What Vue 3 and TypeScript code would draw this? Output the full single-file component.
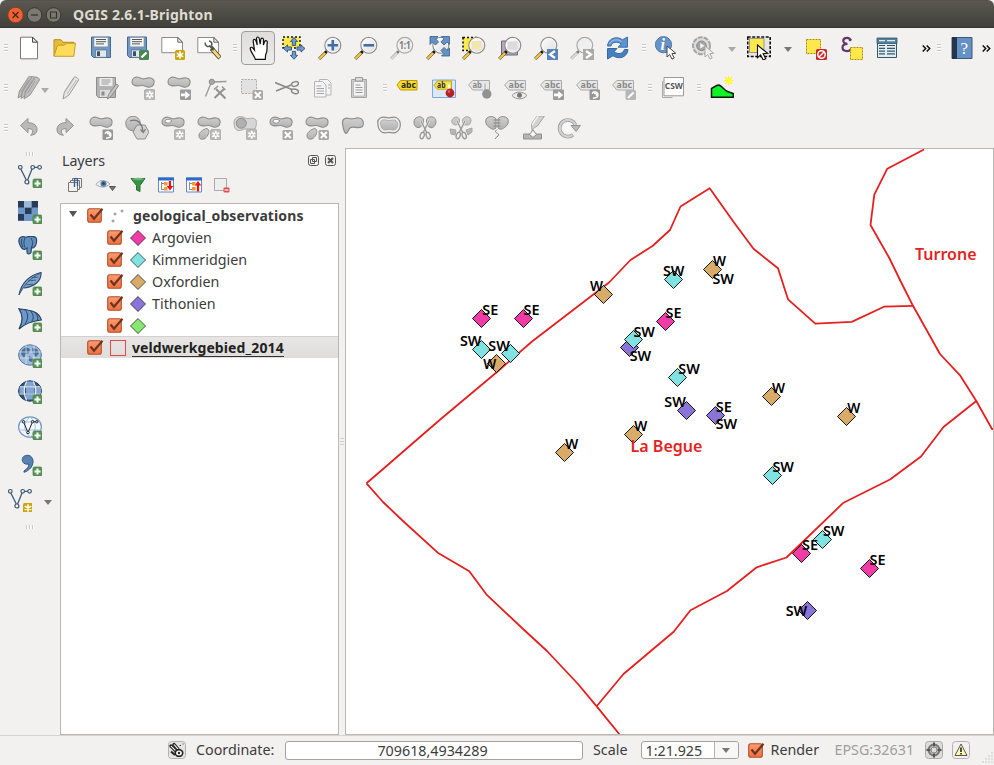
<script setup lang="ts">
interface Tool {
  icon?: string
  kind?: 'grip' | 'arrow' | 'more'
  cls?: string
}

const tool = (icon: string, cls = ''): Tool => ({ icon, cls })
const grip: Tool = { kind: 'grip' }

const fileBar: Tool[] = [
  tool('new'), tool('open'), tool('save'), tool('saveas'), tool('composer'), tool('manager'),
  grip,
  tool('hand', 'active'), tool('pan'), tool('zoomin'), tool('zoomout'), tool('zoomone'), tool('zoomfull'),
  tool('zoomsel'), tool('zoomlayer'), tool('zoomlast'), tool('zoomnext'), tool('refresh'),
  grip,
  tool('identify'), tool('action'), { kind: 'arrow', cls: 'dim' },
  tool('select'), { kind: 'arrow' },
  tool('deselect'), tool('epsilon'), tool('table'),
  { kind: 'more', cls: 'wide' }, { kind: 'grip', cls: 'tight' }, tool('help'), { kind: 'more' },
]

const editBar: Tool[] = [
  tool('pencils', 'narrow'), { kind: 'arrow', cls: 'dim small' },
  tool('pencil'), tool('saveedits'), tool('capture'), tool('move'), tool('node'),
  tool('delsel'), tool('cut'), tool('copy'), tool('paste'),
  grip,
  tool('abc'), tool('abcpin'), tool('abcpingrey'), tool('abceye'), tool('abcmove'), tool('abcrot'), tool('abcedit'),
  grip, tool('csw'), grip, tool('terrain'),
]

const advancedBar: Tool[] = [
  'undo', 'redo', 'rotatefeat', 'simplify', 'addring', 'addpart', 'fillring', 'delring', 'delpart',
  'reshape', 'offset', 'split', 'splitparts', 'merge', 'mergeattr', 'rotatesym',
].map((n) => tool(n))

const bars = [fileBar, editBar, advancedBar]

const sideIcons = ['vector', 'raster', 'postgis', 'spatialite', 'mssql', 'wms', 'wcs', 'wfs', 'csv']

const colors = {
  argovien: '#f13ca8',
  kimmeridgien: '#80e3e1',
  oxfordien: '#d8ab68',
  tithonien: '#8a74d8',
  other: '#86e96f',
}

const classes = [
  { name: 'Argovien', color: colors.argovien },
  { name: 'Kimmeridgien', color: colors.kimmeridgien },
  { name: 'Oxfordien', color: colors.oxfordien },
  { name: 'Tithonien', color: colors.tithonien },
  { name: '', color: colors.other },
]

const boundaries = [
  '366.5,483.3 386,466.5 409,446.500 442,418 497,372 532,341.5 609,282.5 630.5,260 652.5,246 670,230 680.5,206.5 709.7,188.3 734,222.5 753.5,248.8 778,268.3 788,299.3 815.3,323.7 851.7,321.9 884,306.7 913,305.8',
  '924,149.5 887.3,168.7 874.3,194.7 870.5,225 889.3,258 901,282 913,305.8 926,329 940,354 960.3,375.7 976.3,401 992,429 996,429',
  '366.5,483.3 383,502 403,521 437.7,552.7 469.3,571.3 486.3,594.3 522,628 547,651 578,684 596.7,706.3 620,735',
  '596.7,706.3 623.5,674 673.7,631.7 690.5,610.3 727,591 756.7,567.3 786.5,557.5 843.5,502.7 890,479.5 921,456.5 943.5,427 976.3,401',
]

const c = colors
const points: [number, number, string][] = [
  [481.5, 318.5, c.argovien], [523.5, 318.5, c.argovien], [603.5, 294.5, c.oxfordien],
  [673.5, 279.5, c.kimmeridgien], [712.5, 269.5, c.oxfordien], [665.5, 321.5, c.argovien],
  [629.5, 347.5, c.tithonien], [633.5, 339.5, c.kimmeridgien], [481.5, 349.5, c.kimmeridgien],
  [496.5, 363.5, c.oxfordien], [510.5, 353.5, c.kimmeridgien], [677.5, 377.5, c.kimmeridgien],
  [686.5, 410.5, c.tithonien], [715.5, 415.5, c.tithonien], [771.5, 396.5, c.oxfordien],
  [846.5, 416.5, c.oxfordien], [633.5, 434.5, c.oxfordien], [564.5, 452.5, c.oxfordien],
  [772.5, 475.5, c.kimmeridgien], [822.5, 539.5, c.kimmeridgien], [801.5, 553.5, c.argovien],
  [869.5, 568.5, c.argovien], [807.5, 610.5, c.tithonien],
]

const labels: [string, number, number][] = [
  ['SE', 482.3, 315], ['SE', 523.5, 315], ['W', 590, 291], ['SW', 663, 276.3], ['W', 713, 266.3],
  ['SW', 712.5, 283.5], ['SE', 665.5, 318], ['SW', 633.5, 336.5], ['SW', 629.7, 361.3], ['SW', 460, 345.8],
  ['SW', 488.3, 350.5], ['W', 483.3, 368.5], ['SW', 678.3, 374.3], ['SW', 664.3, 407], ['SE', 715.7, 412.3],
  ['SW', 715.7, 429.3], ['W', 772, 393.3], ['W', 847.3, 413.3], ['W', 634.3, 431], ['W', 565.3, 449],
  ['SW', 772.5, 472], ['SW', 823, 536], ['SE', 802, 550], ['SE', 869.5, 565.3], ['SW', 785.7, 615.5],
]
const labelWidth: Record<string, number> = { SE: 16, SW: 21.5, W: 13 }
</script>

<template>
  <div class="window">
    <svg class="sprite" width="0" height="0" aria-hidden="true">
      <defs>
        <linearGradient id="lens" x1="0" y1="0" x2="1" y2="1"><stop offset="0" stop-color="#fff" /><stop offset="1" stop-color="#dcdcdc" /></linearGradient>
        <linearGradient id="blob" x1="0" y1="0" x2="0" y2="1"><stop offset="0" stop-color="#cfcfcf" /><stop offset="1" stop-color="#b2b2b2" /></linearGradient>
        <linearGradient id="orange" x1="0" y1="0" x2="0" y2="1"><stop offset="0" stop-color="#fc9c70" /><stop offset="1" stop-color="#ee6f40" /></linearGradient>
        <g id="b-plus"><rect x="15" y="15" width="9" height="9" rx="1.5" fill="#5a9557" stroke="#3f7b3e" stroke-width=".7" /><path d="M19.5 16.5v6M16.5 19.5h6" stroke="#fff" stroke-width="2" /></g>
        <g id="b-gold"><rect x="14" y="14" width="10" height="10" rx="1.5" fill="#cda40b" /><path d="M19 15.200v7.600M15.700 17.100l6.600 3.800M22.300 17.100l-6.600 3.800" stroke="#fff" stroke-width="1.500" /></g>
        <g id="b-star"><rect x="13.500" y="13.500" width="10.500" height="10.500" rx="1.500" fill="#b9b9b9" stroke="#a6a6a6" stroke-width=".8" /><path d="M18.750 14.800v8M15.300 16.800l6.900 4M22.200 16.800l-6.900 4" stroke="#fff" stroke-width="1.900" /><circle cx="18.750" cy="18.800" r="1.100" fill="#b5b5b5" /></g>
        <g id="b-x"><rect x="13.500" y="14" width="10.500" height="10" rx="1.500" fill="#a8a8a8" /><path d="M15.800 16l6 6M21.800 16l-6 6" stroke="#fff" stroke-width="1.900" /></g>
        <g id="b-arrow"><rect x="13" y="13.500" width="11" height="10.500" rx="1" fill="#9b9b9b" /><path d="M14 17.500h4.200v-2.600l5 4-5 4v-2.600H14z" fill="#fff" /></g>
        <g id="b-rot"><rect x="13.500" y="13.500" width="10.500" height="10.500" rx="1" fill="#969696" /><path d="M17 22.300l2.500-.5a3 3 0 1 0-3.300-4M18 17.500h2.500v2.500" fill="none" stroke="#fff" stroke-width="1.400" /></g>
        <g id="floppy">
          <path d="M2.500 1h19v20.5h-17l-2-2z" fill="#6f98c6" stroke="#44688f" /><path d="M5 1.500h14v9.300H5z" fill="#f5f5f0" stroke="#7b8a9a" stroke-width=".5" /><path d="M7 3.500h10M7 5.700h10M7 7.900h8" stroke="#555" stroke-width="1" /><path d="M6.500 14h11v7.300h-11z" fill="#e4e7ea" stroke="#49637f" stroke-width=".6" /><rect x="8" y="15.300" width="3" height="4.700" fill="#35516f" />
        </g>
        <g id="page"><path d="M.8 1.500h16l4.700 4.700v10.500H.8z" fill="#fff" stroke="#8a8a8a" /><path d="M16.800 1.500v4.700h4.700z" fill="#eee" stroke="#444" stroke-width=".8" /></g>
        <g id="lensbody">
          <path d="M8.2 15.8l-7 7" stroke="#555" stroke-width="3.100" /><path d="M7.400 16.800l-6 6" stroke="#f7c62e" stroke-width="2.200" /><path d="M8.800 15.200l-1.700 1.700" stroke="#111" stroke-width="2.600" />
          <circle cx="14.800" cy="9.300" r="7.900" fill="url(#lens)" stroke="#8b8b8b" stroke-width="1.300" /><circle cx="14.800" cy="9.300" r="6.900" fill="none" stroke="#fff" stroke-width=".7" />
        </g>
        <g id="lensgrey">
          <path d="M8.200 15.800l-7 7" stroke="#aaa" stroke-width="3" /><path d="M7.400 16.800l-6 6" stroke="#ddd" stroke-width="1.800" /><path d="M8.800 15.200l-1.700 1.700" stroke="#777" stroke-width="2.400" />
          <circle cx="14.800" cy="9.300" r="7.900" fill="#efefef" stroke="#aaa" stroke-width="1.200" />
        </g>
        <path id="bean" d="M1 5.700C1 2.400 4 .9 7 1.200c2.600.3 4 2.300 6.500 1.600C17.500 1.400 22.400 1.200 23 5.200c.6 4.200-2.600 6.500-6 6-2.500-.4-3.500-1.900-6-1.700C6.500 10.300 1 10.300 1 5.700z" fill="url(#blob)" stroke="#8d8d8d" stroke-width="1.100" />
        <path id="cursor" d="M0 0v11l2.700-2.400 2.300 4.500 2.200-1.200-2.300-4.300 3.900-.3z" />
        <g id="tag"><path d="M.6 9L4.800 4.500h16.700v9.500H4.800z" fill="#e7e7e7" stroke="#aaa" /><text x="4.600" y="12.300" font-size="9.500" font-weight="700" fill="#8a8a8a" textLength="15.500" lengthAdjust="spacingAndGlyphs">abc</text></g>
        <path id="pencilshape" d="M1 23l1.400-7L12 1.300c1-1 5 1 4.500 2.800L7 19z" stroke-linejoin="round" />
        <g id="scissors" fill="none" stroke="#999"><path d="M8 5l5.500 11M16 5l-5.500 11" stroke="#f2f1f0" stroke-width="2.600" /><path d="M8 5l5.500 11M16 5l-5.500 11" stroke-width="1.400" /><ellipse cx="9.200" cy="19.500" rx="1.900" ry="3.300" stroke-width="1.400" transform="rotate(20 9.200 19.500)" /><ellipse cx="15.200" cy="19.500" rx="1.900" ry="3.300" stroke-width="1.400" transform="rotate(-20 15.200 19.500)" /></g>
        <g id="vee" fill="none"><path d="M2.800 5l5.500 11M9.600 16L14 5M16.300 3.300h3.500" stroke-width="1.300" /><circle cx="2.300" cy="3.300" r="1.800" /><circle cx="14.700" cy="3.300" r="1.800" /><circle cx="21.600" cy="3.300" r="1.800" /><circle cx="8.900" cy="18" r="2" /></g>
        <g id="globe"><ellipse cx="12" cy="11" rx="11.400" ry="10.200" /></g>

        <symbol id="i-new" viewBox="0 0 24 24"><path d="M3.500 1.200h12l5 5v16.600h-17z" fill="#fff" stroke="#777" /><path d="M15.500 1.200v5h5z" fill="#eee" stroke="#333" stroke-width=".9" /></symbol>
        <symbol id="i-open" viewBox="0 0 24 24"><path d="M1 20V3.700h7l2 2.600h11v3" fill="#e8bc37" stroke="#b58b18" /><path d="M1 20.300L4.500 9.200h7l2-2h9L20.800 20.300z" fill="#ffdb5c" stroke="#c1961d" stroke-width=".9" /></symbol>
        <symbol id="i-save" viewBox="0 0 24 24"><use href="#floppy" /></symbol>
        <symbol id="i-saveas" viewBox="0 0 24 24"><use href="#floppy" /><rect x="14" y="14" width="10" height="10" rx="1.500" fill="#478651" /><path d="M16.500 21.500l5-5" stroke="#fff" stroke-width="2.400" /></symbol>
        <symbol id="i-composer" viewBox="0 0 24 24"><use href="#page" /><use href="#b-gold" /></symbol>
        <symbol id="i-manager" viewBox="0 0 24 24"><use href="#page" /><path d="M14.500 12.500l8.500 9.500" stroke="#594b1b" stroke-width="4.600" /><path d="M15.500 13.500l7 8" stroke="#efd983" stroke-width="2.700" /><path d="M8 6.500c0 3.800 3 4.500 4.500 3.500l4 4.500M12 5c2.800.5 3.600 3 2.300 4.800l3 3.200" fill="none" stroke="#555" stroke-width="1.500" /></symbol>
        <symbol id="i-hand" viewBox="0 0 24 24"><path d="M9.300 23.300C8.500 19.500 5.300 17.500 4.300 13c-.3-2 1.700-2.300 2.600-.8l1.600 2L7.200 5.100c-.2-2.200 2-2.400 2.600-.6L11.300 9 10.500 2.700c0-2.200 2.400-2.200 2.700-.2L14.200 8.200l.6-4.900c.4-1.900 2.600-1.500 2.700.4L17.400 9l1.300-3.400c.8-1.600 2.900-.8 2.600 1-1 5.500 1 7.500-1.700 12.300l-.3 4.400z" fill="#fff" stroke="#111" stroke-width="1.200" /></symbol>
        <symbol id="i-pan" viewBox="0 0 24 24"><path d="M1 1h17v11H1z" fill="#ffe84b" stroke="#111" stroke-width="1.400" stroke-dasharray="2 2" /><path d="M12 1.500l3.600 4h-2v4h-3.200v-4h-2zM12 23.300l3.600-4h-2v-4h-3.200v4h-2zM1.500 12.500l4-3.600v2h4v3.200h-4v2zM23 12.500l-4-3.600v2h-4v3.200h4v2z" fill="#6e9bd0" stroke="#32557e" stroke-width=".9" /></symbol>
        <symbol id="i-zoomin" viewBox="0 0 24 24"><use href="#lensbody" /><path d="M14.800 4v10.600M9.500 9.300h10.600" stroke="#3f6fa8" stroke-width="2.600" /></symbol>
        <symbol id="i-zoomout" viewBox="0 0 24 24"><use href="#lensbody" /><path d="M9.500 9.300h10.600" stroke="#3f6fa8" stroke-width="2.600" /></symbol>
        <symbol id="i-zoomone" viewBox="0 0 24 24"><use href="#lensgrey" /><text x="9.200" y="13" font-size="10" font-weight="700" fill="#777" textLength="11.500" lengthAdjust="spacingAndGlyphs">1:1</text></symbol>
        <symbol id="i-zoomfull" viewBox="0 0 24 24"><use href="#lensbody" /><path d="M4 .500h8L9.600 2.900l3 3-3.200 3.200-3-3L4 8.500zM23.500.500h-8l2.400 2.400-3 3L18 9l3.100-3 2.400 2.400zM23.500 20h-8l2.400-2.400-3-3 3.200-3.200 3 3 2.400-2.400z" fill="#6691c4" stroke="#345c8c" stroke-width=".8" /></symbol>
        <symbol id="i-zoomsel" viewBox="0 0 24 24"><path d="M1 1.500h14v13H1z" fill="#ffe84b" stroke="#111" stroke-width="1.600" stroke-dasharray="2 2" /><use href="#lensbody" /><path d="M9.500 5h10v8.500h-10z" fill="#f1e6ad" /></symbol>
        <symbol id="i-zoomlayer" viewBox="0 0 24 24"><path d="M3.500 5h16v14h-16z" fill="#b5a8b8" stroke="#70657a" /><use href="#lensbody" /><path d="M9.500 5.500h9.500v8h-9.500z" fill="#ded8e1" /></symbol>
        <symbol id="i-zoomlast" viewBox="0 0 24 24"><use href="#lensbody" /><rect x="13" y="13" width="11" height="11" fill="#5685b9" /><path d="M21 15l-5 3.500 5 3.500" fill="none" stroke="#fff" stroke-width="2.200" /></symbol>
        <symbol id="i-zoomnext" viewBox="0 0 24 24"><use href="#lensgrey" /><rect x="13" y="13" width="11" height="11" fill="#aaa" /><path d="M16 15l5 3.500-5 3.500" fill="none" stroke="#fff" stroke-width="2.200" /></symbol>
        <symbol id="i-refresh" viewBox="0 0 24 24"><path d="M1.500 10C2 3 9.500-.8 16.500 3.700L21.500 1v10.200H12L15.300 8C11 5 6 6 5 10z" fill="#5d93cd" stroke="#3c70ab" /><path d="M22 13.500c-.5 7-8 10.800-15 6.300L1.500 23V12.500H11L8 15.800c4.300 3 9.300 2 10.300-2.300z" fill="#4581c2" stroke="#3768a3" /><path d="M3.500 8C6 3 12 3 15.500 5.500" fill="none" stroke="#a9c9e8" /></symbol>
        <symbol id="i-identify" viewBox="0 0 24 24"><circle cx="8.500" cy="8.700" r="8.100" fill="#6792c7" stroke="#4e78aa" /><text x="5.500" y="14" font-size="16" font-family="Liberation Serif, serif" font-style="italic" font-weight="700" fill="#fff">i</text><use href="#cursor" x="12" y="10" fill="#fff" stroke="#444" /></symbol>
        <symbol id="i-action" viewBox="0 0 24 24"><circle cx="10.500" cy="9.800" r="8.500" fill="#ddd" stroke="#a5a5a5" stroke-width="2" stroke-dasharray="5 1" /><circle cx="10.500" cy="9.800" r="4.800" fill="#a5a5a5" stroke="#888" /><path d="M9.200 7v5.600l4.500-2.800z" fill="#f4f4f4" /><use href="#cursor" x="14" y="10" fill="#eee" stroke="#aaa" /></symbol>
        <symbol id="i-select" viewBox="0 0 24 24"><path d="M.700 1h22.500v19.500H.700z" fill="#e6e6e6" stroke="#111" stroke-width="1.600" stroke-dasharray="3 1.500" /><path d="M2.500 2.500h14.500v14H2.500z" fill="#ffe84b" stroke="#777" stroke-width=".7" /><use href="#cursor" fill="#fff" stroke="#111" transform="translate(10.500 9) scale(1.150)" /></symbol>
        <symbol id="i-deselect" viewBox="0 0 24 24"><path d="M3.500 3.500h14v14h-14z" fill="#ffe84b" stroke="#b28a00" stroke-dasharray="2 1" /><rect x="13" y="13" width="11" height="11" rx="1.500" fill="#d12525" /><circle cx="18.500" cy="18.500" r="3.700" fill="none" stroke="#fff" stroke-width="1.500" /><path d="M16 21l5-5" stroke="#fff" stroke-width="1.500" /></symbol>
        <symbol id="i-epsilon" viewBox="0 0 24 24"><path d="M12 4.500C11 2.300 9.500 1.800 8 1.800 5.500 1.800 4.300 3.300 4.300 4.800c0 2 1.800 3 4.200 3-3.500 0-5 1.300-5 3.800 0 2.200 2 3.500 4.500 3.500 2.800 0 4-1.500 4.500-3" fill="none" stroke="#633a6b" stroke-width="2.200" /><circle cx="11" cy="4" r="1.300" fill="#633a6b" /><path d="M11.500 11.500h12v12h-12z" fill="#ffe84b" stroke="#b28a00" stroke-dasharray="2 1" /></symbol>
        <symbol id="i-table" viewBox="0 0 24 24"><path d="M2.500 2.500h19v19h-19z" fill="#e3ebf0" stroke="#31576f" /><path d="M2 2h20v5.500H2z" fill="#53809b" stroke="#31576f" stroke-width=".8" /><path d="M4 4.700h6M12 4.700h8" stroke="#e3ebf0" stroke-width="1.200" /><path d="M4 9.500h6M12 9.500h8M4 12.300h6M12 12.300h8M4 15.100h6M12 15.100h8M4 17.900h6M12 17.900h8" stroke="#31576f" stroke-width="1.200" /></symbol>
        <symbol id="i-help" viewBox="0 0 24 24"><path d="M2 1.500h20v21H2z" fill="#6591c5" stroke="#3b587c" /><path d="M2 1h5v22H2z" fill="#253648" /><text x="10.500" y="18" font-size="17" font-family="Liberation Serif, serif" fill="#fff">?</text></symbol>

        <symbol id="i-pencils" viewBox="0 0 24 24"><g fill="#bdbdbd" stroke="#8f8f8f" stroke-width=".9"><use href="#pencilshape" x="0" y="-1" /><use href="#pencilshape" x="3" y="-.5" /><use href="#pencilshape" x="6" y="0" /></g><path d="M4 16L11.500 4M7.500 16.500L15 4.500M10.500 17L18 5" stroke="#999" stroke-width=".8" /></symbol>
        <symbol id="i-pencil" viewBox="0 0 24 24"><use href="#pencilshape" x="3" y="0" fill="#e7e7e7" stroke="#999" /><path d="M5.500 16.500L15 2.500M8 18l9.500-14" stroke="#b5b5b5" /></symbol>
        <symbol id="i-saveedits" viewBox="0 0 24 24"><path d="M1.500 1.500h19v20h-17l-2-2z" fill="#b3b3b3" stroke="#8d8d8d" /><path d="M4.500 2h13v8h-13z" fill="#ededed" /><path d="M6.500 4h9M6.500 6h9M6.500 8h7" stroke="#999" /><path d="M5 14h10v7H5z" fill="#ddd" /><path d="M6.500 15.500h3v4h-3z" fill="#8a8a8a" /><path d="M12.500 23l1-4.500L21 8.500c1-.500 2.700.500 2.300 1.600L16 20.500z" fill="#c4c4c4" stroke="#8b8b8b" /></symbol>
        <symbol id="i-capture" viewBox="0 0 24 24"><use href="#bean" /><use href="#b-star" /></symbol>
        <symbol id="i-move" viewBox="0 0 24 24"><use href="#bean" /><use href="#b-arrow" /></symbol>
        <symbol id="i-node" viewBox="0 0 24 24"><path d="M2.500 20.500L8.500 6l15-.5" fill="none" stroke="#999" stroke-width="1.300" /><circle cx="8.800" cy="5.800" r="2.600" fill="#a8a8a8" stroke="#888" /><path d="M13 13l9.500 9.500M21.500 12.500L11.500 22" stroke="#929292" stroke-width="2" /><path d="M11 13.500l4-3.500M19 10.500l3.500 3.500" stroke="#999" stroke-width="1.500" /></symbol>
        <symbol id="i-delsel" viewBox="0 0 24 24"><path d="M2.500 3.500h15v14h-15z" fill="#e2e2e2" stroke="#aaa" stroke-dasharray="2 1.200" /><use href="#b-x" /></symbol>
        <symbol id="i-cut" viewBox="0 0 24 24"><path d="M0 6.500l17 7M1 15L16 9" stroke="#8b8b8b" stroke-width="1.800" /><ellipse cx="20" cy="8" rx="3.500" ry="2.200" fill="none" stroke="#888" stroke-width="1.500" transform="rotate(-15 20 8)" /><ellipse cx="20" cy="15.300" rx="3.500" ry="2.200" fill="none" stroke="#888" stroke-width="1.500" transform="rotate(15 20 15.300)" /></symbol>
        <symbol id="i-copy" viewBox="0 0 24 24"><g fill="#f5f5f5" stroke="#b5b5b5"><path d="M8.500 3.500h8l3.500 3.500v12H8.500z" /><path d="M3.500 5.500h8l3.500 3.500v12h-11.500z" /></g><path d="M5.500 10h5M5.500 12.500h7.500M5.500 15h7.500M5.500 17.500h7.500M17 9h2M17 12h2" stroke="#a5a5a5" /></symbol>
        <symbol id="i-paste" viewBox="0 0 24 24"><path d="M4.500 3.500h15v18h-15z" fill="#ccc" stroke="#a5a5a5" /><path d="M6.500 5.500h11v14.500h-11z" fill="#f4f4f4" stroke="#aaa" stroke-width=".7" /><path d="M8.500 1.500h7v3.500h-7z" fill="#ddd" stroke="#999" /><path d="M8.500 9h5M8.500 11.500h7M8.500 14h7M8.500 16.500h7" stroke="#999" /></symbol>
        <symbol id="i-abc" viewBox="0 0 24 24"><path d="M1 9l3.500-4.500h16.500v9.500H4.500z" fill="#f8d929" stroke="#bf9a05" /><text x="5" y="12.300" font-size="9.500" font-weight="700" fill="#2d2a18" textLength="14.800" lengthAdjust="spacingAndGlyphs">abc</text></symbol>
        <symbol id="i-abcpin" viewBox="0 0 24 24"><path d="M.500 4h23v17.500H.500z" fill="#dce7f3" stroke="#78a8df" /><path d="M2 9.300l3.500-4.300h14v8.200h-14z" fill="#fae244" stroke="#c5a50b" /><text x="5" y="12.300" font-size="8.500" font-weight="700" fill="#333" textLength="8.500" lengthAdjust="spacingAndGlyphs">ab</text><path d="M17 8.500v7" stroke="#fff" stroke-width="2.400" /><circle cx="18" cy="17" r="4.400" fill="#b52222" /><circle cx="17" cy="15.500" r="1.200" fill="#d76767" /></symbol>
        <symbol id="i-abcpingrey" viewBox="0 0 24 24"><path d="M.600 9L4.800 4.500h16.700v9.500H4.800z" fill="#e7e7e7" stroke="#aaa" /><text x="4.500" y="12.300" font-size="9.500" font-weight="700" fill="#8a8a8a" textLength="9.500" lengthAdjust="spacingAndGlyphs">ab</text><path d="M17 7.500v8" stroke="#eee" stroke-width="3" /><path d="M17 7.500v8" stroke="#999" /><circle cx="18.800" cy="18" r="4.700" fill="#929292" /></symbol>
        <symbol id="i-abceye" viewBox="0 0 24 24"><use href="#tag" /><path d="M8 19.500c4-4.500 11-4.500 15 0-4 4.500-11 4.500-15 0z" fill="#eee" stroke="#909090" /><circle cx="15.500" cy="19.200" r="2.500" fill="#777" /></symbol>
        <symbol id="i-abcmove" viewBox="0 0 24 24"><use href="#tag" /><use href="#b-arrow" /></symbol>
        <symbol id="i-abcrot" viewBox="0 0 24 24"><use href="#tag" /><use href="#b-rot" /></symbol>
        <symbol id="i-abcedit" viewBox="0 0 24 24"><use href="#tag" /><rect x="13.500" y="14" width="10.500" height="10" rx="1.500" fill="#b6b6b6" /><path d="M16 22l5.500-5.500" stroke="#fff" stroke-width="2.200" /></symbol>
        <symbol id="i-csw" viewBox="0 0 24 24"><path d="M1.500 5v16.500h10" fill="none" stroke="#aaa" /><path d="M3 1.500h19.500v18.300H3z" fill="#fff" stroke="#999" /><text x="3.800" y="13" font-size="8.800" font-weight="700" fill="#555" textLength="18" lengthAdjust="spacingAndGlyphs">CSW</text></symbol>
        <symbol id="i-terrain" viewBox="0 0 24 24"><path d="M1.500 21.200V12.500c2-.5 4-3.500 7.500-3.500 3.500 1.500 5 5 8.500 6.500l5.700 2v3.700z" fill="#0cf425" stroke="#111" stroke-width="1.500" /><path d="M18.500 0v9M14 4.500h9.500M15 1.200l7 6.600M22 1.200l-7 6.600" stroke="#ffef38" stroke-width="1.200" /><circle cx="18.500" cy="4.500" r="2.600" fill="#ffff1e" /></symbol>

        <symbol id="i-undo" viewBox="0 0 24 24"><path d="M3.500 9.500L11 2.500v4.200c6 0 9.500 3 9 8-.3 2.500-3 4.500-6.500 4.500 3-2.200 3.500-6.500-2.500-6.700v4.200z" fill="#b9b9b9" stroke="#929292" /></symbol>
        <symbol id="i-redo" viewBox="0 0 24 24"><path d="M20.500 9.500L13 2.500v4.200c-6 0-9.500 3-9 8 .3 2.500 3 4.500 6.500 4.500-3-2.200-3.500-6.500 2.500-6.700v4.200z" fill="#b9b9b9" stroke="#929292" /></symbol>
        <symbol id="i-rotatefeat" viewBox="0 0 24 24"><use href="#bean" /><use href="#b-rot" /></symbol>
        <symbol id="i-simplify" viewBox="0 0 24 24"><circle cx="8" cy="7.500" r="7.300" fill="url(#blob)" stroke="#8d8d8d" /><path d="M12 9h8l4 7-4 7h-8l-4-7z" fill="#d4d4d4" stroke="#8d8d8d" /><path d="M5 5c8-3 12 3 13 10M15.500 13.500l2.700 3 2.300-3.500" fill="none" stroke="#777" stroke-width="1.200" /></symbol>
        <symbol id="i-addring" viewBox="0 0 24 24"><use href="#bean" /><path d="M4 5.800C4 2.800 8 3 10.500 4.300c0 2.700-4 4-6.500 1.500z" fill="#fff" stroke="#8d8d8d" /><use href="#b-star" /></symbol>
        <symbol id="i-addpart" viewBox="0 0 24 24"><use href="#bean" /><path d="M2 20c-.5-3 4-7 8-7.500 3 1.500 2 6-1 9-2 2.500-7 2.500-7-1.500z" fill="url(#blob)" stroke="#8d8d8d" /><use href="#b-star" /></symbol>
        <symbol id="i-fillring" viewBox="0 0 24 24"><path d="M1 7C1 0 8-.5 12 2c4 2 7-2 11 2 1 3 0 7-1 9H11C6 16 1 15 1 7z" fill="#d6d6d6" stroke="#aaa" /><circle cx="8.300" cy="7.200" r="5" fill="#b0b0b0" stroke="#8d8d8d" /><use href="#b-star" /></symbol>
        <symbol id="i-delring" viewBox="0 0 24 24"><use href="#bean" /><path d="M4 5.800C4 2.800 8 3 10.500 4.300c0 2.700-4 4-6.500 1.500z" fill="#fff" stroke="#8d8d8d" /><use href="#b-x" /></symbol>
        <symbol id="i-delpart" viewBox="0 0 24 24"><use href="#bean" /><path d="M2 20c-.5-3 4-7 8-7.500 3 1.500 2 6-1 9-2 2.500-7 2.500-7-1.500z" fill="url(#blob)" stroke="#8d8d8d" /><use href="#b-x" /></symbol>
        <symbol id="i-reshape" viewBox="0 0 24 24"><path d="M1.500 7C1 2.500 5 1.500 8 2.500c4 1.500 6-1 10-.5 4 .5 5.500 5 3.500 8.500C16 14 13 9 9 12c-1.500 1-1.500 4-4 5.500C2 15 2 10 1.500 7z" fill="url(#blob)" stroke="#8d8d8d" stroke-width="1.200" /></symbol>
        <symbol id="i-offset" viewBox="0 0 24 24"><path d="M.800 7C.500 2 5 .800 8.500 1.300c3 1 4.500.500 7 0 4-.8 7.500 2.200 7.800 6.500.4 5-3 9.500-7.500 9-3-.8-4.500-.8-7 0C3 17.500.800 12 .800 7z" fill="#eee" stroke="#8d8d8d" stroke-width="1.200" /><path d="M3.500 7c0-3 3-3.500 5.500-3 2.500 1 4.500.500 6.500 0 3-.5 5.200 1.500 5.300 4 .2 3.500-2 6.500-5 6-3-.8-4.500-.8-7 0C5 14.500 3.500 10 3.500 7z" fill="url(#blob)" stroke="#a5a5a5" stroke-width=".8" /></symbol>
        <symbol id="i-split" viewBox="0 0 24 24"><path d="M1 6c0-6 9-7 9.500-2 .5 4-2 7-4.500 7.500C2.500 12 1 9 1 6zM13.500 4C14-.500 23-.500 23 5.500c0 4-3 7-6 6-2.500-1-4-4-3.500-7.500z" fill="url(#blob)" stroke="#8d8d8d" /><use href="#scissors" /></symbol>
        <symbol id="i-splitparts" viewBox="0 0 24 24"><path d="M3 4c2-4 7-4 7.500 0 .5 3-2 5-4 5S2 7 3 4zM13.500 4c2-5 9-4 8.500 1-1 5-4 4-6 4s-2.500-2.500-2.500-5zM1 13l6 1-1 5-4-1zM17 14l6-2v4l-4 3z" fill="url(#blob)" stroke="#a5a5a5" /><use href="#scissors" /></symbol>
        <symbol id="i-merge" viewBox="0 0 24 24"><path d="M.700 5C.700-.500 9.500-.500 11 3v9c-3 2.500-5 .500-6.500-.500C2 10 .700 8 .700 5zM23.300 5c0-5.500-8.800-5.500-10.300-2v9c3 2.500 5 .500 6.500-.500C22 10 23.300 8 23.300 5z" fill="url(#blob)" stroke="#8d8d8d" /><path d="M8.500 4h7M8.500 7h7M8.500 10h7M12 13.500c-5 4 4 3 1 6.500-1.500 1.500-3 1.500-2.500 3" fill="none" stroke="#858585" /></symbol>
        <symbol id="i-mergeattr" viewBox="0 0 24 24"><path d="M2.500 18h18v5h-18z" fill="#b5b5b5" stroke="#909090" /><path d="M8.500 18.500L12 14l3.500 4.500-3.500 3z" fill="#f5f5f5" stroke="#888" /><path d="M10.500 8L16 0h7.500l-7 10-3 1.500-2.500 3z" fill="#d2d2d2" stroke="#a5a5a5" /><path d="M17 0l-6 9" stroke="#eee" stroke-width="1.500" /></symbol>
        <symbol id="i-rotatesym" viewBox="0 0 24 24"><circle cx="11" cy="11.500" r="5" fill="#f7f7f7" /><path d="M16 18.800A8.300 8.300 0 1 1 18.500 9" fill="none" stroke="#999" stroke-width="3.600" /><path d="M15.500 19.200A8.300 8.300 0 1 1 18.500 9" fill="none" stroke="#d2d2d2" stroke-width="2.200" /><path d="M14 9.500h9.500l-4.500 6z" fill="#b8b8b8" stroke="#8d8d8d" stroke-width=".9" /></symbol>

        <symbol id="i-vector" viewBox="0 0 24 24"><use href="#vee" stroke="#3e5a75" stroke-width="1.200" /><use href="#b-plus" /></symbol>
        <symbol id="i-raster" viewBox="0 0 24 24"><path d="M0 1h20v20H0z" fill="#6e98c8" /><path d="M0 1h6v6.500H0zM13.500 1H20v6.500h-6.500zM7 7.500h6.500V14H7zM0 14h6v6.500H0z" fill="#263c5a" /><path d="M6 1h7.500v6.500H6z" fill="#9db9d8" /><use href="#b-plus" /></symbol>
        <symbol id="i-postgis" viewBox="0 0 24 24"><path d="M1 6C0 1 4 0 8 1.200 12 0 18-.500 18.500 3c.5 5-1.500 8-3.500 9l-1.500-.5-.5 5c-1.500 2.500-4 1.500-4-.5V12l-2.500 1.500C3.500 13 2 10 1 6z" fill="#638fbf" stroke="#29486d" stroke-width="1.200" /><path d="M7 2c-1.500 3-1.500 6 0 9.500M13 2c2 3 2 6 .5 9.500M4 2.500C2.500 6 4 9 5 11" fill="none" stroke="#29486d" /><use href="#b-plus" /></symbol>
        <symbol id="i-spatialite" viewBox="0 0 24 24"><path d="M1 23C3 13 9 4 23 .500c.5 8-6 14-17 15.500" fill="#82a7d0" stroke="#2f4c69" stroke-width="1.200" /><path d="M1 23C5 14 12 6 22 1.500M7 13l8-1M10 9l8-1M13.500 6l7-1" fill="none" stroke="#3d5f83" /><use href="#b-plus" /></symbol>
        <symbol id="i-mssql" viewBox="0 0 24 24"><path d="M1 .800C9 2 21 2 23.300 12c-8 1-16 3-22.300 9C5 14 5 7 1 .800z" fill="#6b97c9" stroke="#263f5f" stroke-width="1.200" /><path d="M7 1.500c4 5 3 10 0 14.500M12 2.500c4 4 4 8 1.500 11.500M17 4.500c3 3 3.500 6 2 8.500" fill="none" stroke="#28466a" /><use href="#b-plus" /></symbol>
        <symbol id="i-wms" viewBox="0 0 24 24"><use href="#globe" fill="#9db9da" stroke="#5278a2" /><path d="M4 6l4-3 4 2-1 4-3 1-2 4-3-4zM14 4l5 1 2 4-3 4-3-3zM11 12l4 2-1 4-3-1z" fill="#4c6f98" /><path d="M1 8h22M2 14h20M8 1v19M16 1v19" stroke="#dce7f3" stroke-width=".7" /><use href="#b-plus" /></symbol>
        <symbol id="i-wcs" viewBox="0 0 24 24"><use href="#globe" fill="#32517a" stroke="#263c58" /><path d="M8 1.500h8v5H8zM1.500 7.500h5.500v6H1.500zM16.500 7.500H23v6h-6.500zM8 7.500h8v6H8zM8 14.500h8v5H8z" fill="#7fa6d4" /><path d="M2 6.800h20M1.500 14h21M8.500 1.500c-3 6-3 12.500 0 19M15.500 1.500c3 6 3 12.500 0 19" fill="none" stroke="#e7eef7" stroke-width="1.200" /><use href="#b-plus" /></symbol>
        <symbol id="i-wfs" viewBox="0 0 24 24"><use href="#globe" fill="#f4f7fb" stroke="#6e96c6" stroke-width="1.200" /><path d="M2 6h20M1 14h22M12 .800c-7 6-7 14 0 20M12 .800c7 6 7 14 0 20" fill="none" stroke="#a7c2e4" /><g fill="none" stroke="#222"><path d="M6 7l3.500 8.500M10.500 15.500L14 7M15.700 5.700h2" /><circle cx="5.500" cy="5.700" r="1.200" /><circle cx="14.500" cy="5.700" r="1.200" /><circle cx="18.800" cy="5.700" r="1.200" /><circle cx="10" cy="16.500" r="1.300" /></g><use href="#b-plus" /></symbol>
        <symbol id="i-csv" viewBox="0 0 24 24"><path d="M6 19c3-2 5-4.500 5-7-4 1-7-1.500-6.800-4.500C4.500 4 8 2.800 11 3.500c5 1.500 5 8 2 12-2 2.500-4.500 4-7 4.800z" fill="#5782b3" stroke="#33577e" /><use href="#b-plus" /></symbol>
        <symbol id="i-newvector" viewBox="0 0 24 24"><use href="#vee" stroke="#3e5a75" stroke-width="1.200" /><use href="#b-gold" x="1" y="1" /></symbol>

        <symbol id="i-check" viewBox="0 0 17 16"><rect x=".700" y="1.700" width="13.600" height="13.600" rx="2" fill="url(#orange)" stroke="#b54f27" stroke-width="1.100" /><path d="M3.500 7.500l3.500 4.200L15.500 1.800" fill="none" stroke="#5d2b18" stroke-width="2.200" stroke-opacity=".9" /></symbol>
      </defs>
    </svg>

    <header class="titlebar">
      <svg class="winbtns" width="64" height="20" viewBox="0 0 64 20">
        <circle cx="10.500" cy="10" r="7.700" fill="#ec6237" stroke="#93391b" /><path d="M7.500 7l6 6M13.500 7l-6 6" stroke="#4b2317" stroke-width="1.300" />
        <circle cx="29.500" cy="10" r="7.300" fill="#7b7971" stroke="#393833" /><path d="M26 10h7" stroke="#34332e" stroke-width="1.300" />
        <circle cx="48.500" cy="10" r="7.300" fill="#7b7971" stroke="#393833" /><path d="M45.500 7h6v6h-6z" fill="none" stroke="#34332e" stroke-width="1.200" />
      </svg>
      <h1>QGIS 2.6.1-Brighton</h1>
    </header>

    <div class="bars">
      <div v-for="(bar, b) in bars" :key="b" class="bar">
        <span class="lines"></span>
        <template v-for="(t, i) in bar" :key="i">
          <span v-if="t.kind === 'grip'" class="gripslot" :class="t.cls"><span class="lines"></span></span>
          <span v-else-if="t.kind === 'arrow'" class="arrowslot" :class="t.cls"><i></i></span>
          <span v-else-if="t.kind === 'more'" class="moreslot" :class="t.cls">
            <svg width="9" height="7" viewBox="0 0 9 7"><path d="M.7.500l3 3-3 3M4.700.500l3 3-3 3" fill="none" stroke="#111" stroke-width="1.500" /></svg>
          </span>
          <button v-else class="slot" :class="t.cls"><svg class="ic"><use :href="'#i-' + t.icon" /></svg></button>
        </template>
      </div>
    </div>

    <main class="body">
      <aside class="side">
        <span class="vlines"></span>
        <svg v-for="s in sideIcons" :key="s" class="ic"><use :href="'#i-' + s" /></svg>
        <div class="siderow"><svg class="ic"><use href="#i-newvector" /></svg><i class="tri"></i></div>
        <span class="vlines end"></span>
      </aside>

      <section class="layers">
        <div class="dockhead">
          <h2>Layers</h2>
          <svg width="28" height="12" viewBox="0 0 28 12" fill="none" stroke="#555"><rect x=".5" y=".5" width="10" height="10" rx="2" /><path d="M4.500 2.500h4v4h-4zM2.500 4.500h4v4h-4z" /><rect x="17.500" y=".5" width="10" height="10" rx="2" /><path d="M20 3l5 5M25 3l-5 5" stroke-width="2" /></svg>
        </div>
        <div class="docktools">
          <svg width="16" height="16" viewBox="0 0 16 16"><g fill="#f2f1f0" stroke="#777"><path d="M5.500 1.500h9v9h-9z" /><path d="M3.500 3.500h9v9h-9z" /><path d="M1.500 5.500h9v9h-9z" /></g><path d="M7.500 10V3c0-2.200 3-2.200 3 0v6" fill="none" stroke="#395f97" stroke-width="1.400" /></svg>
          <svg class="eye" width="22" height="16" viewBox="0 0 22 16"><path d="M1 7.500C4 2.500 10 2 15 7c-4 3.500-9 4.500-14 .500z" fill="#e9edf1" stroke="#aaa" /><circle cx="8.500" cy="6.700" r="3" fill="#5580a9" /><circle cx="8.500" cy="6.500" r="1.300" fill="#233c54" /><path d="M14.500 9.500h6l-3 4z" fill="#777" stroke="#555" /></svg>
          <svg class="funnel" width="16" height="16" viewBox="0 0 16 16"><path d="M1 1.500h14L10 8.500v6l-3.500-1.500V8.500z" fill="#389245" stroke="#25732f" /><ellipse cx="8" cy="2" rx="6" ry="1.200" fill="#71b77a" /></svg>
          <svg v-for="up in [false, true]" :key="String(up)" class="expand" width="18" height="16" viewBox="0 0 18 16"><path d="M1.500 1h15v14h-15z" fill="#fff" stroke="#5c8bd0" /><path d="M1 .5h16v3H1z" fill="#2d68cc" /><path d="M4.500 5v8M4.500 6.500h3M4.500 12.500h3" stroke="#888" fill="none" /><path d="M7 5h3.500v3.500H7zM7 10h3.500v3.500H7z" fill="#f39a30" /><path v-if="up" d="M13 14.500V7" stroke="#e11" stroke-width="2.300" /><path v-if="up" d="M9.700 8.500h6.600L13 4z" fill="#e11" /><path v-if="!up" d="M13 4v6.500" stroke="#e11" stroke-width="2.300" /><path v-if="!up" d="M9.700 9h6.600L13 13.500z" fill="#e11" /></svg>
          <svg width="17" height="16" viewBox="0 0 17 16"><path d="M1.500 1.500h12v12h-12z" fill="#eee" stroke="#aaa" /><rect x="10.500" y="10.500" width="6" height="5" rx="1" fill="#e34b4b" /><path d="M11.500 13h4" stroke="#fff" stroke-width="1.200" /></svg>
        </div>
        <div class="tree">
          <div class="row group">
            <i class="tri dark"></i>
            <svg class="check"><use href="#i-check" /></svg>
            <svg class="sym" width="16" height="16" viewBox="0 0 16 16" fill="#fff" stroke="#888"><circle cx="5" cy="6" r="1" /><circle cx="12" cy="3" r="1" /><circle cx="3" cy="13" r="1" /></svg>
            <b class="gname">geological_observations</b>
          </div>
          <div v-for="k in classes" :key="k.color" class="row child">
            <svg class="check"><use href="#i-check" /></svg>
            <svg class="sym" width="16" height="16" viewBox="0 0 16 16"><path d="M8 .5L15.500 8 8 15.500.500 8z" :fill="k.color" stroke="#111" stroke-dasharray="1 .4" /></svg>
            <span>{{ k.name }}</span>
          </div>
          <div class="row layer">
            <svg class="check"><use href="#i-check" /></svg>
            <span class="polysym"></span>
            <b class="lname">veldwerkgebied_2014</b>
          </div>
        </div>
      </section>

      <div class="splitter"><span></span></div>

      <section class="map">
        <svg width="647" height="585" viewBox="346 149 647 585">
          <polyline v-for="(p, i) in boundaries" :key="i" :points="p" fill="none" stroke="#e61f1f" stroke-width="1.800" stroke-linejoin="round" />
          <path v-for="(p, i) in points" :key="'p' + i" :d="`M${p[0]} ${p[1] - 9}l9 9-9 9-9-9z`" :fill="p[2]" stroke="#000" stroke-width=".9" />
          <text v-for="(l, i) in labels" :key="'l' + i" :x="l[1]" :y="l[2]" :textLength="labelWidth[l[0]]" lengthAdjust="spacingAndGlyphs" class="dir">{{ l[0] }}</text>
          <text x="630.500" y="451.500" textLength="72" lengthAdjust="spacingAndGlyphs" class="place">La Begue</text>
          <text x="915" y="260" textLength="61.500" lengthAdjust="spacingAndGlyphs" class="place">Turrone</text>
        </svg>
      </section>
    </main>

    <footer class="status">
      <svg width="18" height="18" viewBox="0 0 18 18"><rect x=".5" y=".5" width="17" height="17" rx="3" fill="#e5e4e2" stroke="#b5b2ae" /><path d="M3 5l6 6M6 3.500l5 6" stroke="#222" stroke-width="3.400" stroke-linecap="round" /><path d="M3.300 5.300l4 4M6.300 3.800l3.500 4" stroke="#eee" stroke-width="1.200" stroke-linecap="round" /><path d="M3 10.500l4 3.500" stroke="#222" stroke-width="2" /><ellipse cx="11" cy="12" rx="3.700" ry="3.300" fill="#fff" stroke="#222" stroke-width="1.600" /><circle cx="11" cy="12" r="1.200" fill="#222" /><path d="M11.500 4.500h1.500M14.500 3h1" stroke="#444" /></svg>
      <label class="coordlabel">Coordinate:</label>
      <div class="coord"><span>709618,4934289</span></div>
      <label class="scalelabel">Scale</label>
      <div class="scale"><div class="scaletext">1:21.925</div><div class="drop"><i class="tri"></i></div></div>
      <svg class="check rcheck"><use href="#i-check" /></svg>
      <span class="render">Render</span>
      <span class="epsg">EPSG:32631</span>
      <svg class="stbtn" width="18" height="18" viewBox="0 0 18 18"><rect x=".5" y=".5" width="17" height="17" rx="3" fill="#dedddc" stroke="#aaa" /><circle cx="9" cy="9" r="5.500" fill="#bbb" stroke="#777" stroke-width="2" /><path d="M9 1.500v4M9 12.500v4M1.500 9h4M12.500 9h4" stroke="#555" stroke-width="2" /><circle cx="9" cy="9" r="3" fill="#ddd" stroke="#888" /></svg>
      <svg class="stbtn warn" width="18" height="18" viewBox="0 0 18 18"><rect x=".5" y=".5" width="17" height="17" rx="3" fill="#f2f1f0" stroke="#b5b2ae" /><path d="M9 3l6 11.500H3z" fill="#fdfcae" stroke="#555" stroke-linejoin="round" /><path d="M9 6.500v4.500M9 12v1.500" stroke="#222" stroke-width="1.600" /></svg>
      <svg class="resize" width="12" height="12" viewBox="0 0 12 12"><path d="M9 1h2M6 4h2M9 4h2M3 7h2M6 7h2M9 7h2M0 10h2M3 10h2M6 10h2M9 10h2" stroke="#dad8d5" stroke-width="1.500" /></svg>
    </footer>
  </div>
</template>

<style>
body { margin: 0; background: #f2f1f0; }
</style>

<style scoped>
.window { width: 994px; height: 765px; overflow: hidden; display: flex; flex-direction: column; background: #f2f1f0; color: #3c3c3c; font-family: "Noto Sans", sans-serif; font-size: 14.3px; line-height: 22px; white-space: nowrap; }
.window svg { display: block; flex: none; }
.window .sprite { position: absolute; }
h1, h2 { margin: 0; }
.titlebar { flex: none; height: 28px; display: flex; align-items: center; padding: 2px 0 0 5px; border-radius: 6px 6px 0 0; box-sizing: border-box; background: linear-gradient(#504e47, #5a5850 4%, #403f3a); border-bottom: 1px solid #383732; }
.titlebar h1 { margin-left: 4px; font-size: 14px; font-weight: 700; color: #dfdbd2; letter-spacing: 0.2px; }
.bars { flex: none; height: 120px; }
.bar { height: 40px; display: flex; align-items: center; padding-left: 4px; box-sizing: border-box; }
.lines { width: 4px; height: 8px; flex: none; background: repeating-linear-gradient(#c9c7c4 0 1px, #fff 1px 2px, transparent 2px 3px); }
.bar > .lines { margin-right: 3px; }
.slot { width: 36px; height: 34px; flex: none; padding: 0; border: 0; background: none; display: flex; align-items: center; justify-content: center; font-family: inherit; }
.slot.narrow { width: 30px; padding-left: 6px; justify-content: flex-start; }
.slot.narrow .ic { margin-right: -6px; }
.slot.active { width: 34px; margin: 0 1px; border: 1px solid #a09e9b; border-radius: 4px; background: linear-gradient(#dedddc, #ececeb); }
.ic { width: 24px; height: 24px; }
.gripslot { width: 13px; flex: none; display: flex; justify-content: center; padding-left: 2px; box-sizing: border-box; }
.gripslot.tight { width: 13px; justify-content: flex-start; margin-right: -6px; padding-left: 0; }
.arrowslot { width: 20px; flex: none; display: flex; justify-content: center; padding: 2px 0 0 1px; box-sizing: border-box; }
.arrowslot.small { width: 12px; justify-content: flex-start; padding: 4px 0 0; }
.arrowslot i, .tri { width: 0; height: 0; border: 4px solid transparent; border-top: 5px solid #777; border-bottom: 0; }
.arrowslot.dim i { border-top-color: #aaa; }
.moreslot { width: 11px; flex: none; display: flex; justify-content: center; margin-left: 1px; }
.moreslot.wide { width: 31px; padding-left: 10px; box-sizing: border-box; }
.body { flex: none; height: 587px; display: flex; }
.side { width: 60px; flex: none; display: flex; flex-direction: column; align-items: center; padding-top: 4px; box-sizing: border-box; gap: 12px; }
.side .vlines { width: 8px; height: 4px; margin-bottom: -4px; background: repeating-linear-gradient(90deg, #c9c7c4 0 1px, #fff 1px 2px, transparent 2px 3px); }
.side .vlines.end { margin-top: 1px; }
.siderow { align-self: flex-start; display: flex; align-items: center; gap: 12px; padding-left: 8px; }
.siderow .tri { margin-top: 4px; }
.layers { width: 279px; flex: none; display: flex; flex-direction: column; }
.dockhead { height: 24px; flex: none; display: flex; align-items: center; justify-content: space-between; padding: 0 3px 0 2px; }
.dockhead h2 { font-size: 14.3px; font-weight: 400; margin-top: 1px; letter-spacing: -0.1px; }
.dockhead svg { margin-top: 2px; }
.docktools { height: 31px; flex: none; display: flex; align-items: center; padding: 0 0 5px 7px; box-sizing: border-box; gap: 10px; }
.docktools .eye { margin-left: 2px; }
.docktools .funnel { margin: 0 1px 0 3px; }
.tree { flex: 1; background: #fff; border: 1px solid #bab7b3; box-sizing: border-box; padding-top: 1px; }
.row { height: 22px; display: flex; align-items: center; box-sizing: border-box; }
.row .check { margin-right: 6px; }
.row .sym { margin-right: 6px; }
.row .sym { margin-top: -1px; }
.group { padding-left: 8px; }
.group .tri { margin-right: 10px; }
.row .tri.dark { border-top: 6px solid #555; margin-top: -4px; }
.child { padding-left: 46px; }
.layer { padding: 1px 0 0 26px; margin-top: -1px; border-top: 1px solid #d2d0cd; background: linear-gradient(#e8e6e4, #dfddda); }
.polysym { width: 14px; height: 14px; border: 1px solid #e84646; margin: -1px 6px 0 0; flex: none; }
.group .sym { margin-right: 7px; }
.check { width: 17px; height: 16px; margin-top: -3px; }
.gname { font-size: 14px; letter-spacing: 0.1px; }
.lname { font-size: 14px; line-height: 16px; border-bottom: 1px solid #333; color: #222; letter-spacing: 0.1px; }
.splitter { width: 6px; flex: none; display: flex; align-items: center; justify-content: center; }
.splitter span { width: 4px; height: 8px; background: repeating-linear-gradient(#d0cecb 0 1px, transparent 1px 3px); }
.map { width: 649px; flex: none; background: #fff; border: 1px solid #bab7b3; box-sizing: border-box; }
.dir { font-size: 14.3px; font-weight: 600; fill: #000; }
.place { font-size: 15.8px; font-weight: 600; fill: #e61f1f; }
.status { flex: none; height: 30px; display: flex; align-items: center; padding-left: 168px; box-sizing: border-box; border-top: 1px solid #d5d2cf; }
.status > svg { margin-top: -2px; }
.coordlabel { margin: -2px 0 0 10px; width: 89px; }
.coord { width: 298px; height: 19px; box-sizing: border-box; border: 1px solid #a5a29e; border-radius: 3px; background: #fff; display: flex; align-items: center; justify-content: center; line-height: 17px; padding-right: 3px; margin-top: -1px; }
.scalelabel { margin: -2px 0 0 10px; width: 47.5px; }
.scale { width: 98px; height: 18px; display: flex; box-sizing: border-box; border: 1px solid #a5a29e; border-radius: 3px; background: #fff; margin-top: -1px; }
.scaletext { width: 73px; padding-left: 4px; box-sizing: border-box; border-right: 1px solid #b5b2ae; line-height: 17px; }
.drop { flex: 1; display: flex; align-items: center; justify-content: center; background: #f8f7f6; border-radius: 0 3px 3px 0; }
.status .rcheck { margin: -2px 0 0 9px; }
.render { margin: -2px 0 0 6px; width: 64px; }
.epsg { width: 90px; color: #a09e9a; margin-top: -2px; }
.status .warn { margin-left: 9px; }
.status .resize { margin: 14px 0 0 12px; }
</style>
